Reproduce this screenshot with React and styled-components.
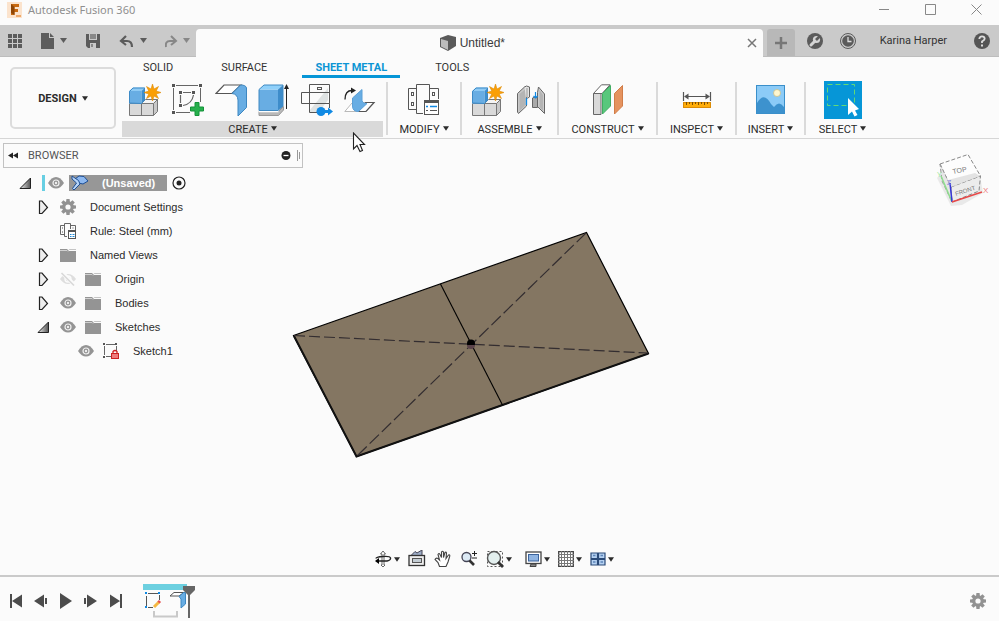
import React from "react";
import styled, { createGlobalStyle } from "styled-components";

const Global = createGlobalStyle`
  * { box-sizing: border-box; }
  body { margin: 0; background: #fbfbfb; }
  button { font: inherit; color: inherit; background: none; border: 0; padding: 0; margin: 0; }
  svg { display: block; flex: none; }
`;

const ui = `"Roboto", "Liberation Sans", sans-serif`;
const sans = `"Liberation Sans", Arial, sans-serif`;

const Page = styled.div`
  position: relative;
  min-height: 100vh;
  display: flex;
  flex-direction: column;
  overflow: hidden;
  background: #fbfbfb;
  color: #2b2b2b;
  font: 11px/16px ${sans};
`;

/* ---------- window title ---------- */
const TitleBar = styled.header`
  display: flex;
  align-items: center;
  height: 25px;
  padding: 0 13px 6px 7px;
  color: #8f8f8f;
`;
const AppName = styled.span`
  flex: 1;
  margin-left: 6px;
  font: 11px/16px "Noto Sans", "Open Sans", sans-serif;
`;
const WindowButtons = styled.div`
  display: flex;
  gap: 26px;
`;
const WindowButton = styled.button`
  width: 20px;
  height: 16px;
  display: grid;
  place-items: center;
`;

/* ---------- document bar ---------- */
const DocumentBar = styled.div`
  display: flex;
  height: 32px;
  background: #cacaca;
  color: #5c5c5c;
`;
const QuickAccess = styled.div`
  display: flex;
  align-items: center;
  width: 196px;
  padding-left: 7px;
  gap: 18px;
  border-bottom: 1px solid #bdbdbd;
`;
const ToolButton = styled.button`
  display: flex;
  align-items: center;
  gap: 5px;
  opacity: ${(p) => (p.$dim ? 0.6 : 1)};
`;
const DocumentTab = styled.div`
  flex: 1;
  display: flex;
  align-items: center;
  margin-top: 4px;
  padding: 0 3px 0 5px;
  border-radius: 4px 4px 0 0;
  background: #fbfbfb;
`;
const DocumentTitle = styled.div`
  flex: 1;
  display: flex;
  align-items: center;
  justify-content: center;
  gap: 4px;
  color: #3a3a3a;
  font: 12px/16px ${sans};
`;
const CloseTab = styled.button`
  width: 16px;
  height: 16px;
  display: grid;
  place-items: center;
`;
const Account = styled.div`
  display: flex;
  align-items: center;
  padding: 0 8px 0 4px;
  border-bottom: 1px solid #bdbdbd;
`;
const NewTab = styled.button`
  align-self: flex-end;
  display: grid;
  place-items: center;
  width: 28px;
  height: 27px;
  margin-right: 11px;
  border-radius: 3px 3px 0 0;
  background: #b8b8b8;
`;
const RoundButton = styled.button`
  width: 18px;
  height: 18px;
  margin-right: ${(p) => p.$after || 0}px;
`;
const UserName = styled.button`
  margin-right: 26px;
  color: #333;
  font: 11px/18px ${ui};
`;

/* ---------- ribbon ---------- */
const Ribbon = styled.div`
  display: flex;
  border-bottom: 1px solid #d6d6d6;
  font: 11px/16px ${ui};
`;
const WorkspaceButton = styled.button`
  display: flex;
  align-items: center;
  justify-content: center;
  gap: 5px;
  width: 106px;
  height: 62px;
  margin: 10px 6px 8px 10px;
  padding-top: 1px;
  border: 2px solid #dcdcdc;
  border-radius: 5px;
  font-weight: 700;
`;
const RibbonMain = styled.div`
  flex: 1;
`;
const Tabs = styled.div`
  display: flex;
  gap: 22px;
  padding-left: 8px;
`;
const Tab = styled.button`
  height: 21px;
  padding: 4px 13px 0;
  line-height: 14px;
  border-bottom: 3px solid ${(p) => (p.$on ? "#0696d7" : "transparent")};
  color: ${(p) => (p.$on ? "#0c95d4" : "#333")};
  font-weight: ${(p) => (p.$on ? 700 : 400)};
`;
const Groups = styled.div`
  display: flex;
  padding-top: 3px;
`;
const Group = styled.section`
  width: ${(p) => p.$width}px;
  display: flex;
  flex-direction: column;
  gap: 2px;
`;
const GroupTools = styled.div`
  display: flex;
  justify-content: center;
  align-items: center;
  gap: 11px;
  height: 38px;
`;
const GroupButton = styled.button`
  display: flex;
  align-items: center;
  justify-content: center;
  gap: 3px;
  height: 16px;
  margin-bottom: 1px;
  padding-top: 1px;
  white-space: nowrap;
  background: ${(p) => (p.$on ? "#d9d9d9" : "transparent")};
  svg { margin-bottom: 2px; }
`;
const Divider = styled.div`
  width: 2px;
  height: 53px;
  margin: 1px 0 0 ${(p) => p.$before || 0}px;
  background: #dadada;
`;

/* ---------- workspace ---------- */
const Workspace = styled.main`
  position: relative;
  flex: 1;
  display: grid;
  grid-template: 1fr auto / 1fr auto;
`;
const Model = styled.svg`
  position: absolute;
  left: 290px;
  top: 91px;
`;
const Browser = styled.aside`
  position: relative;
  width: 300px;
  margin: 4px 0 0 3px;
`;
const BrowserHeader = styled.div`
  display: flex;
  align-items: center;
  height: 25px;
  margin-bottom: 3px;
  padding: 0 1px 0 4px;
  border: 1px solid #c2c2c2;
  color: #555;
  font-family: ${ui};
`;
const BrowserTitle = styled.span`
  flex: 1;
  margin-left: 9px;
`;
const Tree = styled.ul`
  list-style: none;
  margin: 0;
  padding: 0;
`;
const Node = styled.li`
  display: flex;
  align-items: center;
  gap: 9px;
  height: 24px;
  padding-left: ${(p) => p.$indent}px;
`;
const NodeName = styled.span`
  margin-left: 5px;
`;
const RootBar = styled.div`
  display: flex;
  align-items: center;
  gap: 5px;
  height: 16px;
  border-left: 3px solid #67cfe3;
  padding-left: 3px;
`;
const RootName = styled.button`
  display: flex;
  align-items: center;
  gap: 13px;
  height: 16px;
  width: 98px;
  padding-left: 2px;
  background: #979797;
  color: #fff;
  font-weight: 700;
`;
const NavBar = styled.nav`
  grid-column: 1 / -1;
  display: flex;
  justify-content: center;
  align-items: center;
  gap: 8px;
  padding: 0 11px 7px 0;
`;
const NavButton = styled.button`
  display: flex;
  align-items: center;
  gap: 2px;
  height: 18px;
  margin-left: ${(p) => p.$before || 0}px;
`;

/* ---------- timeline ---------- */
const Timeline = styled.footer`
  display: flex;
  align-items: center;
  height: 46px;
  padding: 4px 13px 0 8px;
  border-top: 2px solid #cacaca;
`;
const Playback = styled.div`
  display: flex;
  gap: 9px;
`;
const PlayButton = styled.button`
  width: 16px;
  height: 16px;
`;
const Track = styled.div`
  flex: 1;
  margin: 1px 0 0 18px;
  align-self: flex-start;
`;
const Pointer = styled.svg`
  position: absolute;
  left: 352px;
  top: 132px;
  pointer-events: none;
`;

/* ---------- small glyphs ---------- */
const Svg = ({ w = 16, h = w, children, ...p }) => (
  <svg width={w} height={h} viewBox={`0 0 ${w} ${h}`} fill="none" aria-hidden="true" {...p}>{children}</svg>
);
const Caret = ({ w = 7, h = 5 }) => (
  <svg width={w} height={h} viewBox="0 0 7 5" aria-hidden="true"><path d="M0 0H7L3.5 5Z" fill="currentColor" /></svg>
);
const gearTeeth = [0, 45, 90, 135, 180, 225, 270, 315];
const Gear = () => (
  <Svg w={16}>
    <g fill="#929292">{gearTeeth.map((a) => <path key={a} d="M6.4 0H9.6L10 4H6Z" transform={`rotate(${a} 8 8)`} />)}</g>
    <circle cx="8" cy="8" r="4.2" stroke="#929292" strokeWidth="3.2" />
  </Svg>
);
const Eye = () => (
  <Svg w={16}>
    <path d="M0 8Q3.5 2 8 2T16 8Q12.500 13.500 8 13.500T0 8Z" fill="#949494" />
    <circle cx="8" cy="8" r="3" stroke="#f0f0f0" strokeWidth="1.200" /><circle cx="8" cy="8" r="1.200" fill="#eee" />
  </Svg>
);
const EyeOff = () => (
  <Svg w={16}>
    <path d="M0 8Q3.500 3 8 3T16 8Q12.500 13 8 13T0 8Z" fill="#dedede" />
    <circle cx="8" cy="8" r="3" stroke="#fbfbfb" strokeWidth="1.400" />
    <path d="M1.500 1 15 14.500" stroke="#fbfbfb" strokeWidth="4" /><path d="M1.500 2 14 14.500" stroke="#d8d8d8" strokeWidth="1.600" />
  </Svg>
);
const Folder = () => (
  <Svg w={16}>
    <path d="M0 2H7L9 4H16V15H0Z" fill="#949494" /><path d="M8.500 2H16V3H9.500Z" fill="#c4c4c4" /><path d="M0 3.500H7L8 4.500" stroke="#d0d0d0" />
  </Svg>
);
const Closed = () => <Svg w={16}><path d="M4.500 2H7L12.500 8.500 7 14.500H4.500Z" fill="#eee" stroke="#222" strokeWidth="1.200" /></Svg>;
const Open = () => (
  <Svg w={16}>
    <defs><linearGradient id="tri"><stop offset="0" stopColor="#eee" /><stop offset="1" stopColor="#555" /></linearGradient></defs>
    <path d="M3 13.500H13.500V3Z" fill="url(#tri)" stroke="#222" />
  </Svg>
);
const RuleIcon = () => (
  <Svg w={16}>
    <path d="M4 2.500H.5V11.500H4M4.500 .5V13.500H7M4.500 .5H10.500V6M10.500 2.500H15.500V7" stroke="#666" />
    <path d="M2 5h1M2 9h1M12.500 5h1" stroke="#555" />
    <rect x="8.500" y="7.500" width="7" height="8" fill="#fff" stroke="#555" /><path d="M8 8.500H16" stroke="#555" />
    <path d="M10 11.500h1.500M12.500 11.500h2M10 13.500h1.500M12.500 13.500h2" stroke="#1c86d4" />
  </Svg>
);
const LockedSketch = () => (
  <Svg w={16}>
    <path d="M3 1.500H12M3 13.500H8M1.500 3V12M13.500 3V8" stroke="#666" />
    <path d="M0 0h2v2H0ZM12 0h2v2h-2ZM0 13h2v2H0Z" fill="#555" />
    <rect x="8.500" y="10.500" width="7" height="5" fill="#ee7b7b" stroke="#cc2222" /><path d="M10 10V8.500Q12 6.500 14 8.500V10" stroke="#cc2222" strokeWidth="1.300" />
  </Svg>
);
const SheetBody = () => (
  <Svg w={18} h={16}>
    <path d="M4 4 8 1 13 1.500 17 6 12 9 7.500 8Z" fill="#8db8ef" stroke="#1d4f96" />
    <path d="M1 1 7.500 5.500 9 9 3 15 1.500 13.500 5.500 8 1 4Z" fill="#b7d4f7" stroke="#1d4f96" />
  </Svg>
);

/* ---------- ribbon icons ---------- */
const NewComponent = () => (
  <Svg w={32}>
    <path d="M.5 19.500H24.500V31.500H.5Z" fill="#d9d9d9" stroke="#777" /><path d="M12.500 19.500V31.500" stroke="#777" />
    <path d="M12.500 19.500 16.500 15.500H28.500L24.500 19.500Z" fill="#f4f4f4" stroke="#777" />
    <path d="M28.500 15.500V27.500L24.500 31.500V19.500Z" fill="#c9c9c9" stroke="#777" />
    <path d="M0 7H12.500V19.500H0Z" fill="#68ade3" /><path d="M0 7 4 3.500H16L12.500 7Z" fill="#8fcbf5" /><path d="M12.500 7 16 3.500V16L12.500 19.500Z" fill="#3e8fce" />
    <path d="M.5 19V7.500L4 4H15.500V16L12.500 19.500Z" stroke="#3d8ac6" />
    <path d="M23.500 0 25 5 29.500 2.500 27.200 7 32 8.500 27.200 10 29.500 14.500 25 12 23.500 17 22 12 17.500 14.500 19.800 10 15 8.500 19.800 7 17.500 2.500 22 5Z" fill="#fa9f05" stroke="#dd8b08" strokeWidth=".6" />
  </Svg>
);
const CreateSketch = () => (
  <Svg w={32}>
    <path d="M4 1.500H26M1.500 4V26M28.500 4V18M4 28.500H18" stroke="#666" />
    <path d="M11 8.500H19M8.500 11V19M21.500 11Q20 20 11 21.500" stroke="#666" strokeWidth="1.200" />
    <path d="M0 0h3v3H0ZM27 0h3v3h-3ZM0 27h3v3H0ZM7 7h3v3H7ZM20 7h3v3h-3ZM7 20h3v3H7Z" fill="#555" />
    <path d="M23 18.500h4v4.500h4.500v4H27v4.500h-4V27h-4.500v-4H23Z" fill="#27b04d" stroke="#15933a" />
  </Svg>
);
const Flange = () => (
  <Svg w={32}>
    <path d="M1 9.500 9 1H26L17 9.500Z" fill="#fff" stroke="#555" strokeWidth="1.200" />
    <path d="M17 9.500 25.500 1Q31 1 31.500 4V23.500L23 32V16Q22.500 10 17 9.500Z" fill="#68ade3" stroke="#3d87c1" />
  </Svg>
);
const Extrude = () => (
  <Svg w={32}>
    <path d="M1 27.500H20.500L25.500 22.500V26L20.500 31.500H1Z" fill="#b9b9b9" stroke="#999" /><path d="M1 27.500H20.500" stroke="#fff" strokeWidth="1.500" />
    <path d="M1 5.500H20V26.500H1Z" fill="#68ade3" /><path d="M1 5.500 6 1H25L20 5.500Z" fill="#8fd0fa" /><path d="M20 5.500 25 1V22L20 26.500Z" fill="#3d8cca" />
    <path d="M1 26.500V5.500L6 1H25V22L20 26.500Z" stroke="#3f89c2" />
    <path d="M28.500 25V3" stroke="#222" /><path d="M26 5 28.500 0 31 5Z" fill="#222" />
  </Svg>
);
const Unfold = () => (
  <Svg w={32}>
    <path d="M9 26 27 4V16L18 28H9Z" fill="#dfe3e3" />
    <path d="M8.500 .5H28.500V19.500M17 28.500H8.500V.5M17 19.500H.5V8.500H28.500M8.500 19.500H28.500V24" stroke="#555" />
    <rect x="16.500" y="3.500" width="4" height="2" stroke="#555" />
    <circle cx="20" cy="27.500" r="4.500" fill="#1089e3" /><path d="M23 26H27V23.500L32 27.500 27 31.500V29H23Z" fill="#1089e3" />
  </Svg>
);
const Bend = () => (
  <Svg w={32}>
    <path d="M8 19 .8 27.500H22L30.500 18.500H19" stroke="#b9b9b9" fill="#fff" /><path d="M14 27.500H22L30 18.500H21" stroke="#555" strokeWidth="1.200" />
    <path d="M8.500 14 18 5.500V17Q19 20 23 19.500L14.500 27.500Q8.500 27.500 8.500 22Z" fill="#68ade3" stroke="#5ba0d8" />
    <path d="M1 15.500Q1 6.500 8 6.500" stroke="#222" strokeWidth="1.300" /><path d="M7 3.500 12 6.500 7 9.500Z" fill="#222" />
  </Svg>
);
const SheetRules = () => (
  <Svg w={32}>
    <path d="M8.500 4.500H.5V25.500H8.500M21.500 4.500H30.500V15M8.500 .5H21.500V16M8.500 .5V29.500H15M21.500 12V16" stroke="#555" />
    <rect x="3.500" y="8.500" width="2" height="3" stroke="#555" /><rect x="3.500" y="18.500" width="2" height="3" stroke="#555" /><rect x="24.500" y="8.500" width="2" height="3" stroke="#555" />
    <rect x="16.500" y="16.500" width="14" height="14" fill="#fff" stroke="#555" /><path d="M16 17.500H31" stroke="#555" strokeWidth="3" />
    <path d="M18 22.500h2M22 22.500h7" stroke="#1089e3" strokeWidth="1.400" /><path d="M18 26.500h2M22 26.500h7" stroke="#555" />
  </Svg>
);
const Joint = () => (
  <Svg w={32}>
    <path d="M2.500 9.500 9.500 3 11.500 4V22L3.500 29.500 2.500 28Z" fill="#c9c9c9" stroke="#666" /><path d="M4.500 10 10.500 5V21L4.500 27Z" fill="#b4b4b4" />
    <path d="M9.500 3Q11 1 14.500 3V13Q12.500 15 11 13.500" fill="#e4e4e4" stroke="#666" />
    <path d="M12 4V13" stroke="#999" />
    <path d="M11.500 14V21" stroke="#1089e3" strokeWidth="1.300" />
    <path d="M22.500 8.500 23.500 3 29.500 10V29.500L22.500 22.500Z" fill="#ccc" stroke="#666" /><path d="M24.500 6V23L28 27V11Z" fill="#b4b4b4" />
    <path d="M17.500 14Q20 12 22.500 14V23.500H17.500Z" fill="#aaa" stroke="#666" />
    <path d="M20.500 8V14M18.500 12 20.500 14 22.500 12" stroke="#1089e3" strokeWidth="1.200" />
  </Svg>
);
const Construct = () => (
  <Svg w={32}>
    <path d="M1.500 9.500H9V30.500H1.500Z" fill="#d9d9d9" stroke="#666" /><path d="M1.500 9.500 9.500 .8H18L10 9.500Z" fill="#fff" stroke="#666" />
    <path d="M10.500 9.500 18.500 1.500V22L10.500 30Z" fill="#58c77c" stroke="#41ac63" /><path d="M22.500 9.500 30.500 1.500V22L22.500 30Z" fill="#e5935f" stroke="#d17d48" />
  </Svg>
);
const Measure = () => (
  <Svg w={32}>
    <path d="M2.500 8V17M29.500 8V17M4 12.500H28" stroke="#555" strokeWidth="1.200" /><path d="M3 12.500 7.500 9.500V15.500ZM29 12.500 24.500 9.500V15.500Z" fill="#555" />
    <rect x="2.500" y="18.500" width="27" height="5" fill="#ffad0a" stroke="#db8b05" />
    <path d="M5.500 18v3M8.500 18v2M11.500 18v3M14.500 18v2M17.500 18v3M20.500 18v2M23.500 18v3M26.500 18v2" stroke="#7d4f00" />
  </Svg>
);
const InsertImage = () => (
  <Svg w={30}>
    <rect x=".5" y=".5" width="28" height="28" fill="#8ccbf7" /><circle cx="21" cy="8" r="3.500" fill="#fff7cf" stroke="#c8b97e" strokeWidth=".7" />
    <path d="M1 18Q8 6 15 19L18 22Q23 15 28 22V28H1Z" fill="#3d92ce" /><rect x=".5" y=".5" width="28" height="28" stroke="#3a8fca" />
  </Svg>
);
const SelectTool = () => (
  <Svg w={38}>
    <path d="M0 0H38V38H0Z" fill="#0696d7" /><path d="M3.500 3.500H30.500V24.500H3.500Z" stroke="#62da76" strokeDasharray="5 3" />
    <path d="M24 17V34L28 30.500 30.500 35.500 33.500 34 31 29.500 35 28Z" fill="#fff" />
  </Svg>
);

/* ---------- canvas drawings ---------- */
const ViewCube = () => (
  <svg width="79" height="80" viewBox="0 -1 79 80" fill="none" role="img" aria-label="View cube">
    <path d="M17 38 31 66 42 65 63 53 60 36 24 30Z" fill="#dedede" opacity=".6" />
    <path d="M20 24 48 14.500 60.500 36 31 47Z" fill="#fdfdfd" stroke="#888" strokeDasharray="4 2" />
    <path d="M31 47 60.500 36 59 51 32 62Z" fill="#ececec" stroke="#888" strokeDasharray="4 2" /><path d="M20 24 31 47 32 62 22 41Z" fill="#e6e6e6" stroke="#999" strokeDasharray="4 2" />
    <path d="M28 40 55 33 60 36 31 47Z" fill="#e3e3e3" />
    <path d="M21 36 32 62" stroke="#8ddd8d" strokeWidth="1.500" /><path d="M30 43 32 62" stroke="#3535d8" strokeWidth="1.500" /><path d="M32 62 62 52" stroke="#e84848" strokeWidth="1.500" />
    <g fontFamily="Liberation Sans, sans-serif">
      <text x="33" y="34" fontSize="7" fill="#777" transform="rotate(-11 33 34)">TOP</text>
      <text x="36" y="56" fontSize="6" fill="#777" transform="rotate(-18 36 56)">FRONT</text>
      <text x="63" y="53" fontSize="8" fill="#ee7f7f">X</text><text x="17" y="37" fontSize="7" fill="#9be89b">Y</text><text x="27" y="45" fontSize="7" fill="#8585e0">Z</text>
    </g>
  </svg>
);
const SheetModel = () => (
  <Model width="362" height="232" viewBox="290 230 362 232" fill="none" role="img" aria-label="Sheet metal body with sketch">
    <path d="M293.500 335.500 586.500 232.500 648.500 353.500 356.500 456.500Z" fill="#847662" stroke="#000" strokeWidth="1.200" />
    <path d="M294 336 356.500 456.500 648.500 353.500" stroke="#111" strokeWidth="2" />
    <path d="M440.500 284 502.500 405" stroke="#000" strokeWidth="1.100" />
    <path d="M294 335.500 648 353" stroke="#332d30" strokeWidth="1.200" strokeDasharray="11 4" />
    <path d="M586 233 357 456" stroke="#332d30" strokeWidth="1.200" strokeDasharray="13 4" />
    <circle cx="471" cy="343.500" r="4" fill="#000" /><path d="M467 345A4 4 0 0 0 475 345Z" fill="#5b444b" />
  </Model>
);

/* ---------- navigation icons ---------- */
const Orbit = () => <Svg w={18} h={18}><path d="M9 1 11.500 4H10V15H11L9 17 7 15H8V4H6.500Z" fill="#fff" stroke="#444" strokeWidth=".8" /><path d="M4 11H13Q17 10 16.500 8T9 6.500 2 8.500" stroke="#222" strokeWidth="1.400" /><path d="M1 11 5 8V14Z" fill="#000" /></Svg>;
const LookAt = () => <Svg w={18}><path d="M3 5.500 7 1.500 9 3 14 0V5" fill="#9dadc7" stroke="#445" /><rect x="1" y="5.500" width="15.500" height="10" fill="#eee" stroke="#333" strokeWidth="1.300" /><rect x="4.500" y="8.500" width="9" height="4" fill="#c3ccd3" stroke="#555" /></Svg>;
const Hand = () => <Svg w={18}><path d="M5.500 16.500 4 12.500 1 9.500Q2 7.500 4 8.500L5.500 10 4 4.500Q5 2.500 6 4.500L7.500 7.500V2Q8.500 .5 9.500 2V7.500L11 2.500Q12 1.500 12.500 3L12 8.500 14.500 5Q16.500 4.500 15.500 7L14 12 12 16.500Z" fill="#fff" stroke="#444" strokeWidth="1.100" /></Svg>;
const Zoom = () => <Svg w={18}><circle cx="6.500" cy="7" r="4.500" fill="#dceaf5" stroke="#445" strokeWidth="1.300" /><path d="M9.500 10.500 14 15" stroke="#333" strokeWidth="2.600" /><path d="M14.500 1V6M12 3.500H17M12 8H17" stroke="#222" /></Svg>;
const ZoomWindow = () => <Svg w={18} h={18}><path d="M1.500 1.500H16.500V16.500H1.500Z" stroke="#555" strokeDasharray="2 2" /><circle cx="8" cy="8" r="6.500" fill="#e3efee" stroke="#555" strokeWidth="1.400" /><path d="M12 12 17 17" stroke="#333" strokeWidth="2.800" /></Svg>;
const Display = () => <Svg w={17}><rect x="1" y="1" width="15" height="11.500" fill="#fff" stroke="#444" strokeWidth="1.300" /><rect x="3.500" y="3.500" width="10" height="6.500" fill="#8fb4e2" stroke="#3b639c" /><path d="M6 13H11V15.500H5Z" fill="#888" stroke="#444" /></Svg>;
const Grid = () => <Svg w={16}><path d="M.7 .7H15.300V15.300H.7Z" fill="#fff" stroke="#444" strokeWidth="1.300" /><path d="M3.500 0V16M6.500 0V16M9.500 0V16M12.500 0V16M0 3.500H16M0 6.500H16M0 9.500H16M0 12.500H16" stroke="#777" /></Svg>;
const Viewports = () => <Svg w={16}><path d="M1 2H7.500V7.500H1ZM8.500 2H15V7.500H8.500ZM1 8.500H7.500V14H1ZM8.500 8.500H15V14H8.500Z" fill="#b5d1f1" stroke="#2a4a78" strokeWidth="1.200" /><path d="M3 4.500h2.500M10.500 4.500h2.500M3 11h2.500M10.500 11h2.500" stroke="#5d85b9" strokeWidth="1.500" /></Svg>;

const groups = [
  { name: "CREATE", width: 261, on: true, icons: [NewComponent, CreateSketch, Flange, Extrude, Unfold, Bend] },
  { name: "MODIFY", width: 72, icons: [SheetRules] },
  { name: "ASSEMBLE", width: 95, icons: [NewComponent, Joint] },
  { name: "CONSTRUCT", width: 97, icons: [Construct] },
  { name: "INSPECT", width: 77, icons: [Measure] },
  { name: "INSERT", width: 67, icons: [InsertImage] },
  { name: "SELECT", width: 73, icons: [SelectTool] },
];

const nav = [
  { name: "Orbit", icon: Orbit, menu: true },
  { name: "Look at", icon: LookAt },
  { name: "Pan", icon: Hand },
  { name: "Zoom", icon: Zoom },
  { name: "Zoom window", icon: ZoomWindow, menu: true },
  { name: "Display settings", icon: Display, menu: true, before: 5 },
  { name: "Grid and snaps", icon: Grid, menu: true },
  { name: "Viewports", icon: Viewports, menu: true },
];

const nodes = [
  { name: "Document Settings", indent: 32, parts: [Closed, Gear] },
  { name: "Rule: Steel (mm)", indent: 57, parts: [RuleIcon] },
  { name: "Named Views", indent: 32, parts: [Closed, Folder] },
  { name: "Origin", indent: 32, parts: [Closed, EyeOff, Folder] },
  { name: "Bodies", indent: 32, parts: [Closed, Eye, Folder] },
  { name: "Sketches", indent: 32, parts: [Open, Eye, Folder] },
  { name: "Sketch1", indent: 75, parts: [Eye, LockedSketch] },
];

const playback = [
  ["Go to start", "M2 1H4V15H2ZM14 1.500V14.500L4 8Z"],
  ["Step back", "M11 1.500V14.500L1 8ZM12 5H14V11H12Z"],
  ["Play", "M2 0V16L14 8Z"],
  ["Step forward", "M1 5H3V11H1ZM4 1.500V14.500L14 8Z"],
  ["Go to end", "M2 1.500V14.500L12 8ZM12 1H14V15H12Z"],
];

export default function App() {
  return (
    <Page>
      <Global />
      <TitleBar>
        <Svg w={15} h={16}>
          <path d="M0 0H15V16H0Z" fill="#fbe3cd" /><path d="M4 2H12V5H7.500V7H11V10H7.500V13H4Z" fill="#c8690f" /><path d="M4 2 7.500 5V13L4 11Z" fill="#8f4606" /><path d="M9 13H14V15H9Z" fill="#efaa6c" />
        </Svg>
        <AppName>Autodesk Fusion 360</AppName>
        <WindowButtons>
          <WindowButton aria-label="Minimize"><Svg w={11}><path d="M0 5.500H10" stroke="#888" /></Svg></WindowButton>
          <WindowButton aria-label="Maximize"><Svg w={11}><path d="M.5 .5H10.500V10.500H.5Z" stroke="#888" /></Svg></WindowButton>
          <WindowButton aria-label="Close"><Svg w={11}><path d="M.5 .5 10.500 10.500M10.500 .5 .5 10.500" stroke="#888" /></Svg></WindowButton>
        </WindowButtons>
      </TitleBar>

      <DocumentBar>
        <QuickAccess>
          <ToolButton aria-label="Data panel">
            <Svg w={16}><path d="M1 1h4v4H1ZM6 1h4v4H6ZM11 1h4v4h-4ZM1 6h4v4H1ZM6 6h4v4H6ZM11 6h4v4h-4ZM1 11h4v4H1ZM6 11h4v4H6ZM11 11h4v4h-4Z" fill="currentColor" /></Svg>
          </ToolButton>
          <ToolButton aria-label="File">
            <Svg w={14} h={16}><path d="M0 0H8V5H13V16H0ZM9 0 13 4H9Z" fill="currentColor" /></Svg><Caret />
          </ToolButton>
          <ToolButton aria-label="Save">
            <Svg w={16}><path fillRule="evenodd" d="M1 1H15V15H3L1 13ZM4 1V7H12V1ZM5 10V15H11V10Z" fill="currentColor" /><path d="M5 1H11V6H5ZM6 11H8V14H6Z" fill="currentColor" opacity=".6" /></Svg>
          </ToolButton>
          <ToolButton aria-label="Undo">
            <Svg w={16}><path d="M7 3 2 8 7 12M3 8H8Q13 8 13 14" stroke="currentColor" strokeWidth="2.200" /></Svg><Caret />
          </ToolButton>
          <ToolButton aria-label="Redo" $dim>
            <Svg w={13} h={16}><path d="M6 3 11 8 6 12M10 8H5Q0 8 1 14" stroke="currentColor" strokeWidth="2" /></Svg><Caret />
          </ToolButton>
        </QuickAccess>
        <DocumentTab>
          <DocumentTitle>
            <Svg w={16}><path d="M0 3 8 0 16 2V11L8 16 0 12Z" fill="#5a5a5a" /><path d="M1 4 8 6V15L1 11.500Z" fill="#bcbcbc" /></Svg>
            Untitled*
          </DocumentTitle>
          <CloseTab aria-label="Close document"><Svg w={10}><path d="M1 1 9 9M9 1 1 9" stroke="#777" strokeWidth="1.500" /></Svg></CloseTab>
        </DocumentTab>
        <Account>
          <NewTab aria-label="New document"><Svg w={14}><path d="M7 1V13M1 7H13" stroke="#777" strokeWidth="2.500" /></Svg></NewTab>
          <RoundButton aria-label="Extensions" $after={15}>
            <Svg w={18}><circle cx="9" cy="9" r="8" fill="#5b5b5b" /><path d="M5 13 9 9" stroke="#d4d4d4" strokeWidth="3" strokeLinecap="round" /><circle cx="10.500" cy="7.500" r="3.600" fill="#d4d4d4" /><path d="M10 8 14 4" stroke="#5b5b5b" strokeWidth="2.600" /></Svg>
          </RoundButton>
          <RoundButton aria-label="Job status" $after={23}>
            <Svg w={18}><circle cx="9" cy="9" r="7.500" stroke="#5b5b5b" /><circle cx="9" cy="9" r="5.800" fill="#5b5b5b" /><path d="M9 5V9.500H12.500" stroke="#ddd" strokeWidth="1.300" /></Svg>
          </RoundButton>
          <UserName>Karina Harper</UserName>
          <RoundButton aria-label="Help">
            <Svg w={18}><circle cx="9" cy="9" r="8" fill="#555" /><path d="M6.300 7Q6.500 4.300 9 4.300T11.700 6.800Q11.700 8 9 9.500V11" stroke="#ddd" strokeWidth="1.800" /><path d="M8 12.500h2v2H8Z" fill="#ddd" /></Svg>
          </RoundButton>
        </Account>
      </DocumentBar>

      <Ribbon>
        <WorkspaceButton>DESIGN <Caret w={6} /></WorkspaceButton>
        <RibbonMain>
          <Tabs>
            <Tab>SOLID</Tab><Tab>SURFACE</Tab><Tab $on>SHEET METAL</Tab><Tab>TOOLS</Tab>
          </Tabs>
          <Groups>
            {groups.map((g, i) => (
              <React.Fragment key={g.name}>
                {i > 0 && <Divider $before={i === 1 ? 3 : 0} />}
                <Group $width={g.width}>
                  <GroupTools>{g.icons.map((Icon, n) => <button key={n} aria-label={`${g.name} ${n + 1}`}><Icon /></button>)}</GroupTools>
                  <GroupButton $on={g.on}>{g.name}<Caret w={6} /></GroupButton>
                </Group>
              </React.Fragment>
            ))}
          </Groups>
        </RibbonMain>
      </Ribbon>

      <Workspace>
        <SheetModel />
        <Browser>
          <BrowserHeader>
            <Svg w={11}><path d="M5 2.500V8.500L0 5.500ZM10 2.500V8.500L5 5.500Z" fill="#222" /></Svg>
            <BrowserTitle>BROWSER</BrowserTitle>
            <Svg w={20} h={11}><circle cx="5" cy="5.500" r="4.500" fill="#222" /><path d="M2.500 5.500H7.500" stroke="#fff" strokeWidth="1.300" /><path d="M16.500 0V11M18.500 2V9" stroke="#999" /></Svg>
          </BrowserHeader>
          <Tree>
            <Node $indent={14}>
              <Open />
              <RootBar>
                <Eye />
                <RootName><SheetBody />(Unsaved)</RootName>
                <Svg w={14}><circle cx="7" cy="7" r="6" stroke="#222" strokeWidth="1.200" /><circle cx="7" cy="7" r="2.500" fill="#222" /></Svg>
              </RootBar>
            </Node>
            {nodes.map((n) => (
              <Node key={n.name} $indent={n.indent}>
                {n.parts.map((Part, i) => <Part key={i} />)}
                <NodeName>{n.name}</NodeName>
              </Node>
            ))}
          </Tree>
        </Browser>
        <ViewCube />
        <NavBar>
          {nav.map(({ name, icon: Icon, menu, before }) => (
            <NavButton key={name} aria-label={name} $before={before}><Icon />{menu && <Caret w={6} />}</NavButton>
          ))}
        </NavBar>
      </Workspace>

      <Timeline>
        <Playback>
          {playback.map(([name, d]) => <PlayButton key={name} aria-label={name}><Svg w={16}><path d={d} fill="#4c4c4c" /></Svg></PlayButton>)}
        </Playback>
        <Track>
          <Svg w={56} h={36}>
            <path d="M1 2H45V8H1Z" fill="#6dd0e0" />
            <path d="M6 11.500H16M4.500 14V24M17.500 13V18M6 25.500H11" stroke="#555" /><path d="M3 10h2v2H3ZM16 10h2v2h-2ZM3 24h2v2H3Z" fill="#1089e3" />
            <path d="M12 25 17 20" stroke="#f5b942" strokeWidth="3" /><path d="M16.500 20.500 18 19" stroke="#e65050" strokeWidth="3" />
            <path d="M28 14 32 10.500H42L37 14Z" fill="#fff" stroke="#555" /><path d="M37 14.500 41.500 10.500H43.500V22L39 26V17Z" fill="#68ade3" stroke="#3d87c1" />
            <path d="M12 29V34.500H35V29" stroke="#c9c9c9" strokeWidth="2" />
            <path d="M41 4H53V8L48 13V36H46V13L41 8Z" fill="#666" />
          </Svg>
        </Track>
        <button aria-label="Timeline settings"><Gear /></button>
      </Timeline>

      <Pointer width="14" height="21" viewBox="0 0 14 21" fill="none" aria-hidden="true">
        <path d="M1.500 1V17L5 13.500 8 19.500 10.500 18.500 8 12.500H12.500Z" fill="#fff" stroke="#222" strokeWidth="1.100" />
      </Pointer>
    </Page>
  );
}
